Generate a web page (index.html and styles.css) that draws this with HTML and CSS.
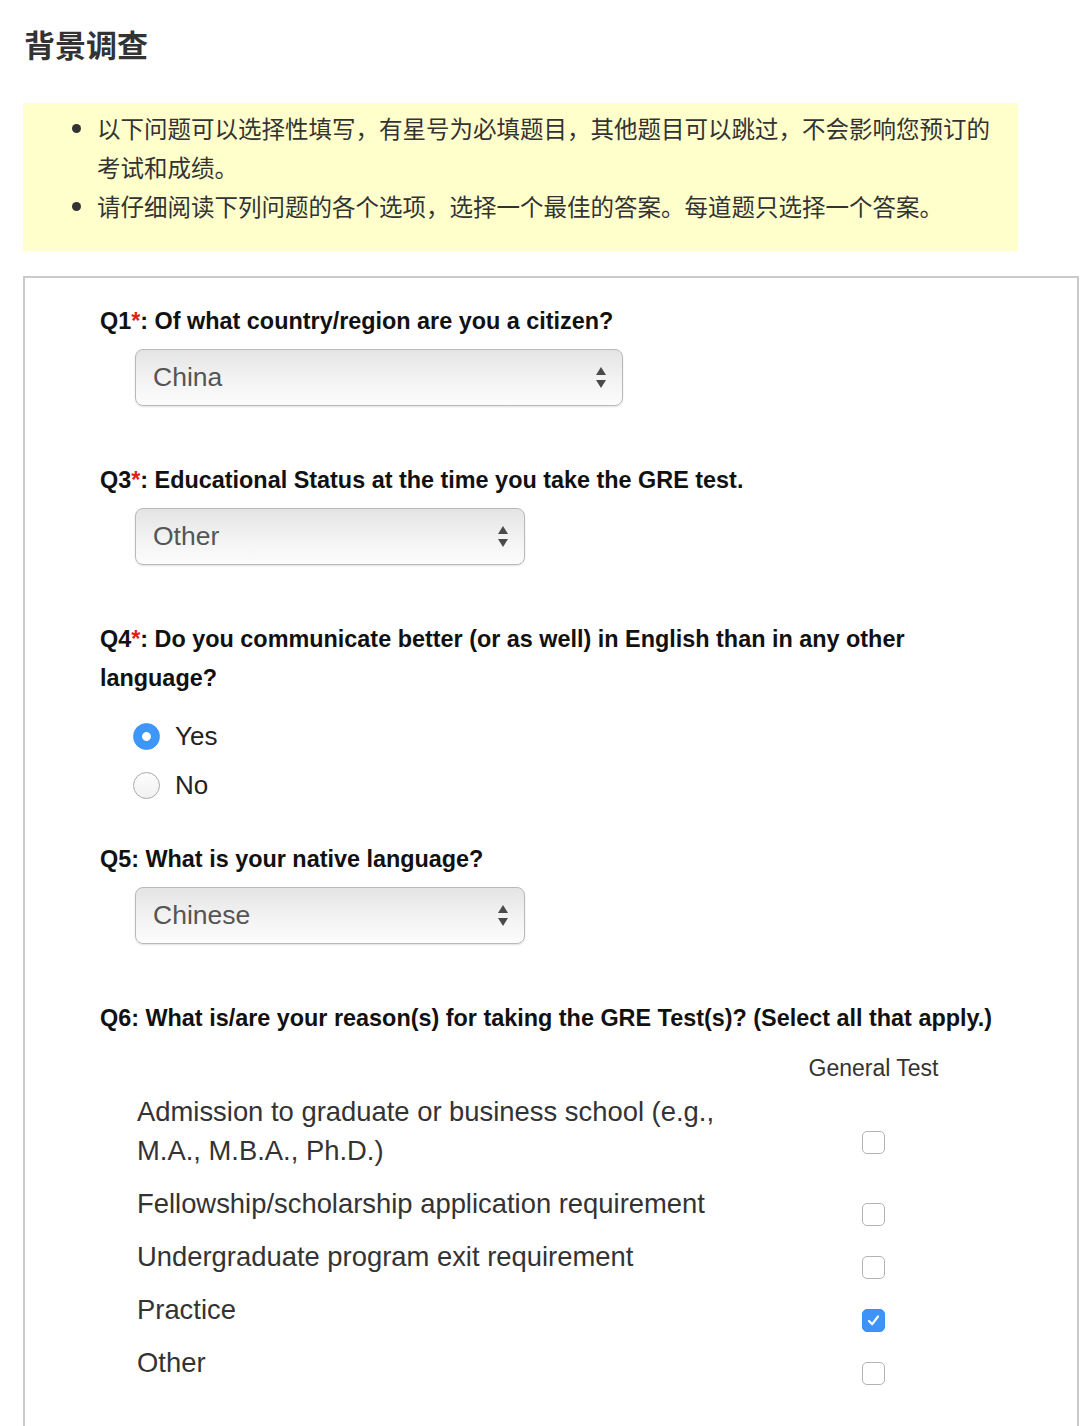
FILE: index.html
```html
<!DOCTYPE html>
<html lang="zh-CN">
<head>
    <meta charset="UTF-8">
    <meta name="viewport" content="width=device-width, initial-scale=1.0">
    <title>背景调查</title>
    <link rel="stylesheet" href="styles.css">
</head>
<body>
<h1 class="page-title">背景调查</h1>

<div class="notice">
    <ul>
        <li>以下问题可以选择性填写，有星号为必填题目，其他题目可以跳过，不会影响您预订的考试和成绩。</li>
        <li>请仔细阅读下列问题的各个选项，选择一个最佳的答案。每道题只选择一个答案。</li>
    </ul>
</div>

<div class="survey">
    <div class="question">
        <div class="question-title">Q1<span class="required">*</span>: Of what country/region are you a citizen?</div>
        <div class="select select-wide">
            <span>China</span>
            <svg class="select-arrows" width="10" height="21" viewBox="0 0 10 21"><path d="M5 0L10 8H0Z M0 13H10L5 21Z"/></svg>
        </div>
    </div>

    <div class="question">
        <div class="question-title">Q3<span class="required">*</span>: Educational Status at the time you take the GRE test.</div>
        <div class="select">
            <span>Other</span>
            <svg class="select-arrows" width="10" height="21" viewBox="0 0 10 21"><path d="M5 0L10 8H0Z M0 13H10L5 21Z"/></svg>
        </div>
    </div>

    <div class="question question-radio">
        <div class="question-title">Q4<span class="required">*</span>: Do you communicate better (or as well) in English than in any other language?</div>
        <div class="radio-group">
            <label class="radio-row"><span class="radio checked"></span>Yes</label>
            <label class="radio-row"><span class="radio"></span>No</label>
        </div>
    </div>

    <div class="question">
        <div class="question-title">Q5: What is your native language?</div>
        <div class="select">
            <span>Chinese</span>
            <svg class="select-arrows" width="10" height="21" viewBox="0 0 10 21"><path d="M5 0L10 8H0Z M0 13H10L5 21Z"/></svg>
        </div>
    </div>

    <div class="question">
        <div class="question-title">Q6: What is/are your reason(s) for taking the GRE Test(s)? (Select all that apply.)</div>
        <table class="reasons">
            <thead>
            <tr>
                <th class="reason-col"></th>
                <th class="check-col">General Test</th>
            </tr>
            </thead>
            <tbody>
            <tr>
                <td>Admission to graduate or business school (e.g., M.A., M.B.A., Ph.D.)</td>
                <td class="check-cell"><span class="checkbox"></span></td>
            </tr>
            <tr>
                <td>Fellowship/scholarship application requirement</td>
                <td class="check-cell"><span class="checkbox"></span></td>
            </tr>
            <tr>
                <td>Undergraduate program exit requirement</td>
                <td class="check-cell"><span class="checkbox"></span></td>
            </tr>
            <tr>
                <td>Practice</td>
                <td class="check-cell">
                    <span class="checkbox checked">
                        <svg width="15" height="15" viewBox="0 0 15 15"><path d="M3 8L6.2 11.2L12 3.5"/></svg>
                    </span>
                </td>
            </tr>
            <tr>
                <td>Other</td>
                <td class="check-cell"><span class="checkbox"></span></td>
            </tr>
            </tbody>
        </table>
    </div>
</div>
</body>
</html>
```

FILE: styles.css
```css
* {
    box-sizing: border-box;
}

body {
    margin: 0;
    background: white;
    font-family: 'Liberation Sans', Arial, 'Noto Sans CJK SC', sans-serif;
    color: #333;
}

.page-title {
    margin: 0;
    padding: 24px 0 0 24px;
    font-family: 'Noto Sans CJK SC', sans-serif;
    font-size: 31px;
    line-height: 40px;
    font-weight: bold;
    color: #333;
}

.notice {
    width: 995px;
    margin: 39px 0 0 23px;
    padding: 6px 0 25px;
    background: #ffffcc;
}

.notice ul {
    margin: 0;
    padding: 0 16px 0 74px;
    list-style: disc;
}

.notice li {
    font-family: 'Noto Sans CJK SC', sans-serif;
    font-size: 23.5px;
    line-height: 39px;
    color: #333;
}

.survey {
    margin: 25px 1px 0 23px;
    padding: 24px 62px 60px 75px;
    border: 2px solid #cacaca;
    border-bottom: none;
}

.question {
    margin-bottom: 55px;
}

.question-radio {
    margin-bottom: 30px;
}

.question-title {
    font-size: 23.4px;
    line-height: 39px;
    font-weight: bold;
    color: #111;
}

.required {
    color: #e0201b;
}

.select {
    display: flex;
    align-items: center;
    justify-content: space-between;
    width: 390px;
    height: 57px;
    margin: 8px 0 0 35px;
    padding: 0 16px 0 17px;
    border: 1px solid #b9b9b9;
    border-radius: 8px;
    background: linear-gradient(#e4e4e4, #f3f3f3 55%, #fcfcfc);
    box-shadow: 0 1px 2px rgba(0, 0, 0, 0.12);
    font-size: 26.5px;
    color: #555;
}

.select-wide {
    width: 488px;
}

.select-arrows {
    fill: #4a4a4a;
}

.radio-group {
    margin: 14px 0 0 33px;
}

.radio-row {
    display: flex;
    align-items: center;
    gap: 15px;
    height: 49px;
    font-size: 26px;
    color: #222;
}

.radio {
    width: 27px;
    height: 27px;
    border-radius: 50%;
    border: 1px solid #a9a9a9;
    background: linear-gradient(#fdfdfd, #f1f1f1);
}

.radio.checked {
    border-color: #3b93f7;
    background: radial-gradient(circle, white 0, white 4px, #3d96fa 4.8px);
}

.reasons {
    margin: 10px 0 0 37px;
    border-collapse: collapse;
}

.reasons th {
    padding: 5px 0 2px;
    font-size: 23px;
    line-height: 30px;
    font-weight: normal;
    color: #333;
}

.reason-col {
    width: 620px;
}

.check-col {
    width: 233px;
}

.reasons td {
    padding: 7px 0;
    font-size: 27.4px;
    line-height: 39px;
    color: #333;
    vertical-align: middle;
}

.reasons td.check-cell {
    padding: 20px 0 0;
    line-height: 23px;
    text-align: center;
}

.checkbox {
    display: inline-flex;
    align-items: center;
    justify-content: center;
    width: 23px;
    height: 23px;
    border: 1px solid #b3b3b3;
    border-radius: 5px;
    background: white;
    vertical-align: middle;
}

.checkbox.checked {
    border-color: #3a8ff5;
    background: #3d93f8;
}

.checkbox svg path {
    fill: none;
    stroke: white;
    stroke-width: 2.2;
    stroke-linecap: round;
    stroke-linejoin: round;
}
```
